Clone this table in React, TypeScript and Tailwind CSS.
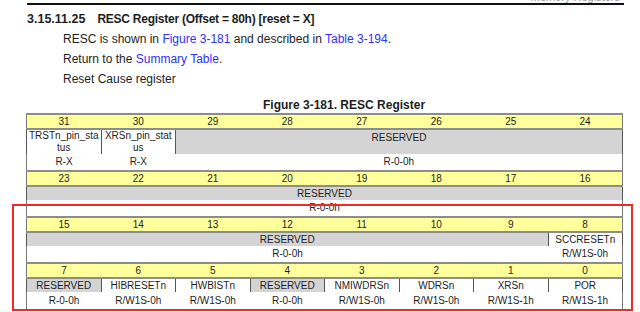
const hdr = "bg-[#ffff9c] text-center h-[15px] border-y-2 border-[#8c8c8c] p-0 leading-none";
const fld = "text-center border-x border-[#555] p-0 leading-[12px]";
const acc = "text-center p-0 h-[17px] leading-none";

function Header({ from, h = "h-[15px]" }: { from: number; h?: string }) {
  const cols = Array.from({ length: 8 }, (_, i) => from - i);
  return (
    <tr>
      {cols.map((n) => (
        <td key={n} className={`${hdr} ${h}`}>
          {n}
        </td>
      ))}
    </tr>
  );
}

type Field = { name: React.ReactNode; span?: number; reserved?: boolean };

function Fields({ items, h = "h-[14px]" }: { items: Field[]; h?: string }) {
  return (
    <tr>
      {items.map((f, i) => (
        <td
          key={i}
          colSpan={f.span ?? 1}
          className={`${fld} ${h} ${f.reserved ? "bg-[#d4d4d4]" : "bg-white"}`}
        >
          {f.name}
        </td>
      ))}
    </tr>
  );
}

function Access({ items }: { items: [string, number?][] }) {
  return (
    <tr>
      {items.map(([a, span], i) => (
        <td key={i} colSpan={span ?? 1} className={acc}>
          {a}
        </td>
      ))}
    </tr>
  );
}

export default function App() {
  return (
    <div className="relative w-[640px] h-[312px] overflow-hidden bg-white text-[#1e1e1e] font-['Liberation_Sans',Arial,sans-serif]">
      {/* clipped running header + rule */}
      <div className="h-[3px] overflow-hidden flex justify-end items-end pr-[20px]">
        <span className="text-[11px] leading-[11px] text-[#999]">Memory Registers</span>
      </div>
      <div className="ml-[27px] w-[597px] h-[2px] bg-[#111]" />

      {/* heading */}
      <h2 className="mt-[7px] ml-[27px] text-[12.5px] leading-[15px] font-bold">
        3.15.11.25<span className="inline-block w-[12px]" />
        <span className="text-[12px] tracking-[-0.25px]">RESC Register (Offset = 80h) [reset = X]</span>
      </h2>

      <div className="mt-[2px] ml-[63px] text-[12px] leading-[20px]">
        <p>
          RESC is shown in <span className="text-[#2f2fff]">Figure 3-181</span> and described in{" "}
          <span className="text-[#2f2fff]">Table 3-194</span>.
        </p>
        <p>
          Return to the <span className="text-[#2f2fff]">Summary Table</span>.
        </p>
        <p>Reset Cause register</p>
      </div>

      {/* figure caption */}
      <div className="mt-[8px] ml-[263px] text-[12px] leading-[16px] font-bold">
        Figure 3-181. RESC Register
      </div>

      {/* register table */}
      <table className="mt-0 ml-[26px] w-[597px] table-fixed border-collapse border-x border-[#777] text-[10px]">
        <tbody>
          <Header from={31} h="h-[13px]" />
          <Fields
            h="h-[25px]"
            items={[
              { name: <>TRSTn_pin_sta<br />tus</> },
              { name: <>XRSn_pin_stat<br />us</> },
              { name: <span className="block h-[22px] pt-[1px]">RESERVED</span>, span: 6, reserved: true },
            ]}
          />
          <Access items={[["R-X"], ["R-X"], ["R-0-0h", 6]]} />

          <Header from={23} />
          <Fields items={[{ name: "RESERVED", span: 8, reserved: true }]} />
          <Access items={[["R-0-0h", 8]]} />

          <Header from={15} />
          <Fields
            items={[
              { name: "RESERVED", span: 7, reserved: true },
              { name: "SCCRESETn" },
            ]}
          />
          <Access items={[["R-0-0h", 7], ["R/W1S-0h"]]} />

          <Header from={7} />
          <Fields
            items={[
              { name: "RESERVED", reserved: true },
              { name: "HIBRESETn" },
              { name: "HWBISTn" },
              { name: "RESERVED", reserved: true },
              { name: "NMIWDRSn" },
              { name: "WDRSn" },
              { name: "XRSn" },
              { name: "POR" },
            ]}
          />
          <Access
            items={[
              ["R-0-0h"],
              ["R/W1S-0h"],
              ["R/W1S-0h"],
              ["R-0-0h"],
              ["R/W1S-0h"],
              ["R/W1S-0h"],
              ["R/W1S-1h"],
              ["R/W1S-1h"],
            ]}
          />
        </tbody>
      </table>

      {/* red highlight box */}
      <div className="absolute left-[12px] top-[204px] w-[621px] h-[107px] border-2 border-[#ee2b25]" />
    </div>
  );
}
